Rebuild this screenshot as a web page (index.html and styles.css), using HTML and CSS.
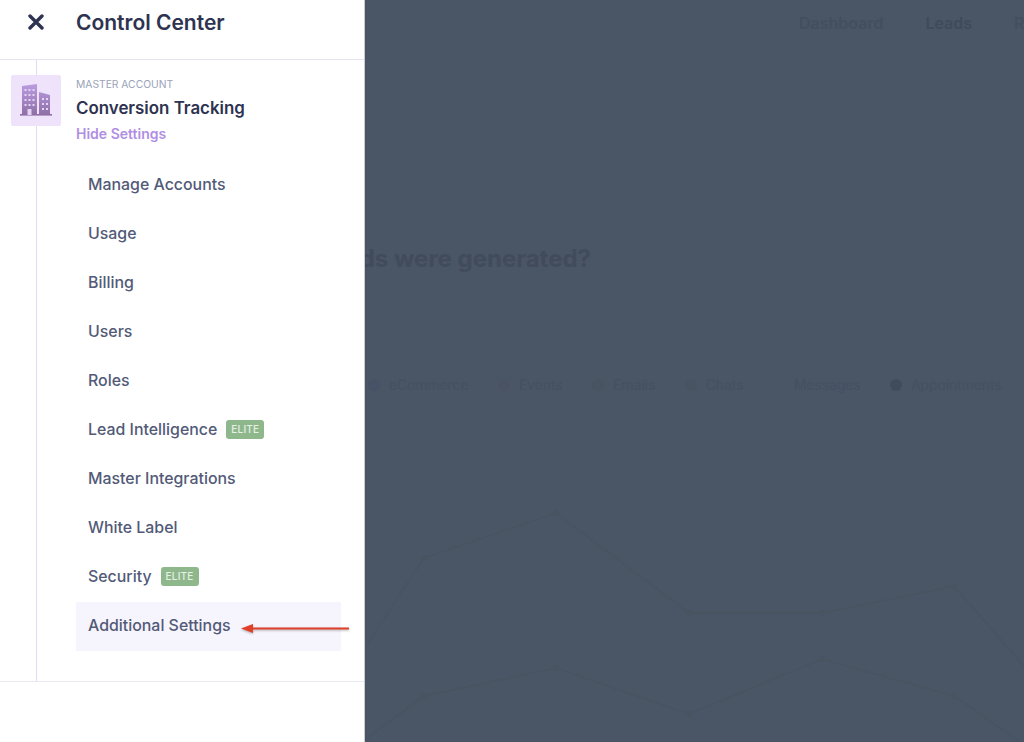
FILE: index.html
```html
<!DOCTYPE html>
<html lang="en">
<head>
    <meta charset="UTF-8">
    <meta name="viewport" content="width=device-width, initial-scale=1.0">
    <title>Control Center</title>
    <link rel="stylesheet" href="styles.css">
</head>
<body>
    <!-- Dimmed page behind the drawer -->
    <div class="page">
        <div class="top-nav">
            <a href="#">Dashboard</a>
            <a href="#" class="active">Leads</a>
            <a href="#">Reports</a>
        </div>
        <h1 class="page-title">How many leads were generated?</h1>
        <div class="legend">
            <div class="legend-item"><span class="dot dot-blue"></span>eCommerce</div>
            <div class="legend-item"><span class="dot dot-grey"></span>Events</div>
            <div class="legend-item"><span class="dot dot-green"></span>Emails</div>
            <div class="legend-item"><span class="dot dot-green"></span>Chats</div>
            <div class="legend-item"><span class="dot dot-faint"></span>Messages</div>
            <div class="legend-item"><span class="dot dot-dark"></span>Appointments</div>
        </div>
        <svg class="chart" viewBox="0 500 1024 242" width="1024" height="242">
            <g fill="none" stroke="#475560" stroke-width="1.5">
                <polyline points="340,685 424,557 556,512 689,612 822,612 954,585 1030,672"/>
                <polyline points="340,757 424,695 556,667 689,713 822,658 954,695 1030,748"/>
            </g>
            <g fill="#475560">
                <circle cx="424" cy="557" r="3"/>
                <circle cx="556" cy="512" r="3"/>
                <circle cx="689" cy="612" r="3"/>
                <circle cx="822" cy="612" r="3"/>
                <circle cx="954" cy="585" r="3"/>
                <circle cx="424" cy="695" r="3"/>
                <circle cx="556" cy="667" r="3"/>
                <circle cx="689" cy="713" r="3"/>
                <circle cx="822" cy="658" r="3"/>
                <circle cx="954" cy="695" r="3"/>
            </g>
        </svg>
    </div>

    <!-- Control center drawer -->
    <div class="drawer">
        <div class="drawer-header">
            <svg class="close-icon" viewBox="0 0 16 16" width="16" height="16">
                <path d="M2 2 L14 14 M14 2 L2 14" fill="none" stroke="#2d3350" stroke-width="3.4" stroke-linecap="round"/>
            </svg>
            <div class="drawer-title">Control Center</div>
        </div>
        <div class="account-section">
            <div class="account">
                <div class="account-icon">
                    <svg viewBox="0 0 50 50" width="50" height="50">
                        <defs>
                            <linearGradient id="building" x1="0" y1="0" x2="0" y2="1">
                                <stop offset="0" stop-color="#bb9ce2"/>
                                <stop offset="1" stop-color="#8f6fa6"/>
                            </linearGradient>
                        </defs>
                        <path d="M11 11 L26 9 V40 H11 Z M28 17 L39 20 V40 H28 Z" fill="url(#building)"/>
                        <rect x="9" y="39" width="32" height="1.6" fill="#8f6fa6"/>
                        <g fill="#e4d3f5">
                            <rect x="13.5" y="14" width="2" height="2"/><rect x="17.5" y="14" width="2" height="2"/><rect x="21.5" y="14" width="2" height="2"/>
                            <rect x="13.5" y="19" width="2" height="2"/><rect x="17.5" y="19" width="2" height="2"/><rect x="21.5" y="19" width="2" height="2"/>
                            <rect x="13.5" y="24" width="2" height="2"/><rect x="17.5" y="24" width="2" height="2"/><rect x="21.5" y="24" width="2" height="2"/>
                            <rect x="13.5" y="29" width="2" height="2"/><rect x="17.5" y="29" width="2" height="2"/><rect x="21.5" y="29" width="2" height="2"/>
                            <rect x="16.5" y="34" width="4" height="6"/>
                            <rect x="31" y="23" width="2" height="2"/><rect x="35" y="23" width="2" height="2"/>
                            <rect x="31" y="28" width="2" height="2"/><rect x="35" y="28" width="2" height="2"/>
                            <rect x="31" y="33" width="2" height="2"/><rect x="35" y="33" width="2" height="2"/>
                        </g>
                    </svg>
                </div>
                <div class="account-info">
                    <div class="account-label">MASTER ACCOUNT</div>
                    <div class="account-name">Conversion Tracking</div>
                    <a href="#" class="hide-settings">Hide Settings</a>
                </div>
            </div>
            <div class="menu">
                <div class="menu-item">Manage Accounts</div>
                <div class="menu-item">Usage</div>
                <div class="menu-item">Billing</div>
                <div class="menu-item">Users</div>
                <div class="menu-item">Roles</div>
                <div class="menu-item">Lead Intelligence <span class="badge">ELITE</span></div>
                <div class="menu-item">Master Integrations</div>
                <div class="menu-item">White Label</div>
                <div class="menu-item">Security <span class="badge">ELITE</span></div>
                <div class="menu-item highlighted">
                    Additional Settings
                    <svg class="arrow" viewBox="0 0 110 12" width="110" height="12">
                        <path d="M108 6.5 H10" stroke="#e0402a" stroke-width="1.8"/>
                        <path d="M0 6.5 L12 2 V11 Z" fill="#e0402a"/>
                    </svg>
                </div>
            </div>
        </div>
        <div class="drawer-footer"></div>
    </div>
</body>
</html>
```

FILE: styles.css
```css
body {
    margin: 0;
    font-family: Inter, "Liberation Sans", sans-serif;
    background-color: #4a5565;
}
.page {
    width: 1024px;
    height: 742px;
    overflow: hidden;
    display: flex;
    flex-direction: column;
    color: #3f4857;
}
.top-nav {
    display: flex;
    gap: 42px;
    margin-left: 799px;
    padding-top: 14px;
    height: 18px;
    font-size: 16px;
    font-weight: 600;
    line-height: 18px;
    white-space: nowrap;
}
.top-nav a {
    color: #444e5f;
    text-decoration: none;
}
.top-nav a.active {
    color: #404a5a;
}
.page-title {
    margin: 212px 0 0 0;
    width: 591px;
    text-align: right;
    font-size: 24px;
    font-weight: 700;
    line-height: 30px;
    white-space: nowrap;
    color: #414b5b;
}
.legend {
    display: flex;
    gap: 29.5px;
    margin: 102px 0 0 368px;
    font-size: 13.8px;
    line-height: 18px;
    color: #465062;
}
.legend-item {
    display: flex;
    align-items: center;
    gap: 9px;
}
.dot {
    width: 12px;
    height: 12px;
    border-radius: 50%;
}
.dot-blue { background-color: #465265; }
.dot-grey { background-color: #4a5363; }
.dot-green { background-color: #485462; }
.dot-faint { background-color: #4a5565; }
.dot-dark { background-color: #414b5b; }
.chart {
    display: block;
    margin-top: 107px;
    flex: none;
}
.drawer {
    position: absolute;
    top: 0;
    left: 0;
    width: 364px;
    height: 742px;
    background-color: #fff;
    border-right: 1px solid #c9ccd3;
}
.drawer-header {
    display: flex;
    align-items: center;
    height: 59px;
    border-bottom: 1px solid #e7e4f3;
}
.close-icon {
    margin: -15px 0 0 28px;
}
.drawer-title {
    margin: -15px 0 0 32px;
    font-size: 21px;
    font-weight: 600;
    color: #2d3350;
}
.account-section {
    margin-left: 36px;
    height: 621px;
    border-left: 1px solid #e0dbfb;
    box-sizing: border-box;
    padding-top: 15px;
}
.account {
    display: flex;
    gap: 15px;
    margin-left: -26px;
}
.account-icon {
    width: 50px;
    height: 51px;
    background-color: #efe2fb;
    border-radius: 2px;
}
.account-label {
    font-size: 10.3px;
    line-height: 18px;
    color: #9aa3b9;
}
.account-name {
    margin-top: 4px;
    font-size: 16.9px;
    font-weight: 600;
    line-height: 22px;
    color: #2d3350;
}
.hide-settings {
    display: block;
    margin-top: 6px;
    font-size: 14px;
    font-weight: 600;
    line-height: 18px;
    color: #b08ee4;
    text-decoration: none;
}
.menu {
    margin: 18px 0 0 39px;
    width: 265px;
}
.menu-item {
    display: flex;
    align-items: center;
    gap: 9px;
    position: relative;
    box-sizing: border-box;
    height: 49px;
    padding: 0 0 2px 12px;
    font-size: 15.9px;
    font-weight: 500;
    color: #525a78;
}
.highlighted {
    background-color: #f6f4fc;
}
.badge {
    padding: 0 5px;
    font-size: 10px;
    line-height: 19px;
    font-weight: 500;
    letter-spacing: 0.2px;
    background-color: #8fb78c;
    color: #e6f0e4;
    border-radius: 3px;
}
.arrow {
    position: absolute;
    left: 165px;
    top: 20px;
    filter: drop-shadow(0 1px 1px rgba(0, 0, 0, 0.3));
}
.drawer-footer {
    border-top: 1px solid #e7e9f3;
}
```
